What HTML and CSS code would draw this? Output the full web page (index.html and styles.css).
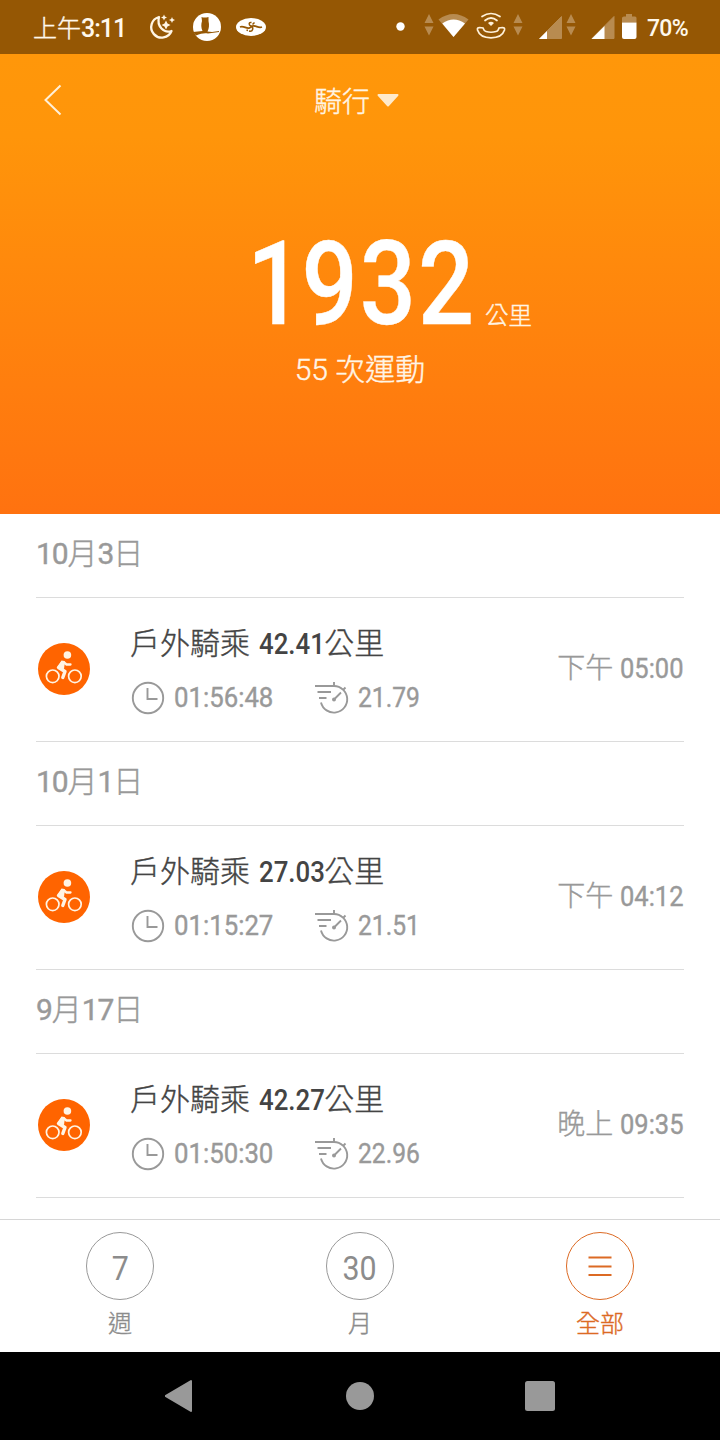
FILE: index.html
```html
<!DOCTYPE html>
<html lang="zh-Hant">
<head>
  <meta charset="UTF-8">
  <meta name="viewport" content="width=device-width, initial-scale=1.0">
  <title>騎行</title>
  <link rel="stylesheet" href="styles.css">
</head>
<body>
  <!-- Shared icons -->
  <svg class="sprite" width="0" height="0">
    <symbol id="bike" viewBox="0 0 52 52">
      <circle cx="26" cy="26" r="26" fill="#ff6400"/>
      <g fill="none" stroke="#fff4e4" stroke-linecap="round" stroke-linejoin="round">
        <circle cx="14.7" cy="33.3" r="6.3" stroke-width="1.7"/>
        <circle cx="36.900" cy="33.3" r="6.3" stroke-width="1.7"/>
        <path d="M24.500 19.500L20.500 24.500L27 28.500L24.800 34.500" stroke-width="3.400"/>
        <path d="M25.500 19L28.500 21.500H32.500" stroke-width="2.300"/>
      </g>
      <path d="M23.500 17.500L27 18.500L26 26L19 25Z" fill="#fff4e4"/>
      <circle cx="29.400" cy="12" r="3.800" fill="#fff4e4"/>
    </symbol>
    <symbol id="clock" viewBox="0 0 34 34">
      <g fill="none" stroke="#999" stroke-width="1.900">
        <circle cx="17" cy="17" r="15.200"/>
        <path d="M16.500 7V18H26.500"/>
      </g>
    </symbol>
    <symbol id="speed" viewBox="0 0 36 34">
      <g fill="none" stroke="#999" stroke-width="1.900">
        <path d="M1 5H20A13.300 13.300 0 1 1 7 21.500"/>
        <path d="M3.500 11H17M5 17H12.500M20 1V5M29 9L31.500 6.500M20 18.500L27 11.500"/>
      </g>
      <circle cx="20" cy="18.500" r="2" fill="#999"/>
    </symbol>
    <symbol id="updown" viewBox="0 0 10 22">
      <path d="M5 0L9.500 9H.5ZM5 21.500L9.500 12.500H.5Z" fill="#b88b50"/>
    </symbol>
  </svg>

  <div class="status-bar">
    <div class="status-left">
      <span class="status-time">上午<b>3:11</b></span>
      <svg class="icon-moon" width="28" height="28" viewBox="0 0 28 28">
        <path d="M11 4A10.500 10.500 0 1 0 23.500 18C16 20.500 8.500 13.500 11 4Z" fill="none" stroke="#fff5e4" stroke-width="2.300" stroke-linejoin="round"/>
        <path d="M18 7.500L19.500 10.500L22.500 12L19.500 13.500L18 16.500L16.500 13.500L13.500 12L16.500 10.500ZM16 1.500L16.900 3.600L19 4.500L16.900 5.400L16 7.500L15.100 5.400L13 4.500L15.100 3.600ZM24 4L24.900 6.100L27 7L24.900 7.900L24 10L23.100 7.900L21 7L23.100 6.100Z" fill="#fff5e4"/>
      </svg>
      <svg class="icon-owl" width="28" height="28" viewBox="0 0 28 28">
        <circle cx="14" cy="14" r="14" fill="#fff"/>
        <path d="M8.500 4L10 4.500H13.500L15.500 4V8C16.500 12 16 16 14.500 18.500L19 19L26 18V19L15 20.500C11 20 8 20.500 3 22.500L0 19L9.500 18C8 15 8 11 9 8Z" fill="#955704"/>
      </svg>
      <svg class="icon-eye" width="30" height="18" viewBox="0 0 30 18">
        <ellipse cx="15" cy="9" rx="15" ry="9" fill="#fff"/>
        <path d="M4 9C8 7.500 10 11 13.500 10L16.500 8C20 7 22 10.500 26 9" fill="none" stroke="#955704" stroke-width="1.800"/>
        <path d="M15.500 4.500C12.500 4 12.500 7 15 8C18 9.500 17 14 13 13M18.500 4.500L16.500 6.500M11.500 11.500L11 13" fill="none" stroke="#955704" stroke-width="1.500"/>
      </svg>
    </div>
    <div class="status-right">
      <svg width="240" height="30" viewBox="0 0 240 30">
        <circle cx="5.500" cy="14.500" r="4.200" fill="#fff"/>
        <use href="#updown" x="29" y="2" width="10" height="22"/>
        <path d="M43.500 7.500Q58.500 -3.500 73.500 7.500L58.500 25Z" fill="#b88b50"/>
        <path d="M47.300 11.500Q58.500 3.500 70 11.500L58.500 25Z" fill="#fff"/>
        <g fill="none" stroke="#fff1da" stroke-width="1.700" stroke-linecap="round">
          <path d="M87 4.500Q96 -1.500 105 4.500M90 8.500Q96 3.500 102 8.500"/>
          <path d="M82.500 18Q85 25.800 96 25.800Q107 25.800 109.500 18Q110 15.500 107.500 15.500L104 16Q103 19.500 101 19.500Q96 21 91 19.500Q89 19 88 16L84.500 15.500Q82 15.500 82.500 18"/>
        </g>
        <path d="M93 11Q96 8.500 99 11L96 14Z" fill="#fff1da"/>
        <use href="#updown" x="118" y="2" width="10" height="22"/>
        <path d="M144.500 26.500L166.500 4.500V26.500Z" fill="#b88b50" stroke="#b88b50" stroke-linejoin="round"/>
        <path d="M144 27L152 19V27Z" fill="#fff"/>
        <use href="#updown" x="171" y="2" width="10" height="22"/>
        <path d="M197 26.500L219 4.500V26.500Z" fill="#b88b50" stroke="#b88b50" stroke-linejoin="round"/>
        <path d="M196.500 27L209.500 14V27Z" fill="#fff"/>
        <path d="M231 2H237V4.500H240Q241.500 4.500 241.500 6V10.500H227V6Q227 4.500 229 4.500H231Z" fill="#b88b50"/>
        <path d="M227 10.500H241.500V25Q241.500 27 239.500 27H229Q227 27 227 25Z" fill="#fff"/>
      </svg>
      <span class="battery">70%</span>
    </div>
  </div>

  <header class="hero">
    <div class="title-bar">
      <svg class="back" width="20" height="32" viewBox="0 0 20 32">
        <path d="M17.500 1.500L2.500 16L17.500 30.500" fill="none" stroke="#fff0d8" stroke-width="2"/>
      </svg>
      <h1 class="page-title">騎行</h1>
      <svg width="22" height="14" viewBox="0 0 22 14">
        <path d="M1.500 2H20.500L11 12.500Z" fill="#ffeacb" stroke="#ffeacb" stroke-width="2" stroke-linejoin="round"/>
      </svg>
    </div>
    <div class="total">
      <span class="total-value">1932</span>
      <span class="total-unit">公里</span>
    </div>
    <p class="total-count">55 次運動</p>
  </header>

  <main class="list">
    <h2 class="date"><span class="d">10</span>月<span class="d">3</span>日</h2>
    <div class="ride">
      <svg class="ride-icon" width="52" height="52"><use href="#bike"/></svg>
      <div class="ride-info">
        <div class="ride-name">戶外騎乘 <span class="ride-km">42.41</span>公里</div>
        <div class="ride-stats">
          <svg width="34" height="34"><use href="#clock"/></svg>
          <span class="duration">01:56:48</span>
          <svg width="36" height="34"><use href="#speed"/></svg>
          <span class="speed">21.79</span>
        </div>
      </div>
      <div class="ride-time">下午 <span class="hour">05:00</span></div>
    </div>

    <h2 class="date"><span class="d">10</span>月<span class="d">1</span>日</h2>
    <div class="ride">
      <svg class="ride-icon" width="52" height="52"><use href="#bike"/></svg>
      <div class="ride-info">
        <div class="ride-name">戶外騎乘 <span class="ride-km">27.03</span>公里</div>
        <div class="ride-stats">
          <svg width="34" height="34"><use href="#clock"/></svg>
          <span class="duration">01:15:27</span>
          <svg width="36" height="34"><use href="#speed"/></svg>
          <span class="speed">21.51</span>
        </div>
      </div>
      <div class="ride-time">下午 <span class="hour">04:12</span></div>
    </div>

    <h2 class="date"><span class="d">9</span>月<span class="d">17</span>日</h2>
    <div class="ride">
      <svg class="ride-icon" width="52" height="52"><use href="#bike"/></svg>
      <div class="ride-info">
        <div class="ride-name">戶外騎乘 <span class="ride-km">42.27</span>公里</div>
        <div class="ride-stats">
          <svg width="34" height="34"><use href="#clock"/></svg>
          <span class="duration">01:50:30</span>
          <svg width="36" height="34"><use href="#speed"/></svg>
          <span class="speed">22.96</span>
        </div>
      </div>
      <div class="ride-time">晚上 <span class="hour">09:35</span></div>
    </div>
  </main>

  <nav class="tabs">
    <div class="tab">
      <div class="tab-circle"><span>7</span></div>
      <div class="tab-label">週</div>
    </div>
    <div class="tab">
      <div class="tab-circle"><span>30</span></div>
      <div class="tab-label">月</div>
    </div>
    <div class="tab active">
      <div class="tab-circle">
        <svg width="24" height="22" viewBox="0 0 24 22">
          <path d="M.5 2.500H23.500M.5 11.500H23.500M.5 20H23.500" stroke="#dc6a24" stroke-width="2"/>
        </svg>
      </div>
      <div class="tab-label">全部</div>
    </div>
  </nav>

  <div class="system-nav">
    <svg width="30" height="34" viewBox="0 0 30 34"><path d="M.5 17L26 2V32Z" fill="#999" stroke="#999" stroke-width="2" stroke-linejoin="round"/></svg>
    <svg width="30" height="30" viewBox="0 0 30 30"><circle cx="15" cy="15" r="14" fill="#999"/></svg>
    <svg width="30" height="30" viewBox="0 0 30 30"><rect width="30" height="30" rx="2.500" fill="#999"/></svg>
  </div>
</body>
</html>
```
FILE: styles.css
```css
* {
  margin: 0;
  padding: 0;
  box-sizing: border-box;
}

body {
  width: 720px;
  height: 1440px;
  overflow: hidden;
  display: flex;
  flex-direction: column;
  font-family: Roboto, "Noto Sans CJK TC", sans-serif;
  font-weight: 300;
  -webkit-text-stroke: 0.4px;
  background: #fff;
  color: #999;
}

svg {
  display: block;
  flex: none;
}

.sprite {
  display: none;
}

/* Status bar */
.status-bar {
  height: 54px;
  flex: none;
  display: flex;
  justify-content: space-between;
  padding: 0 32px 0 33px;
  background: #955704;
  color: #fff8ec;
}

.status-left,
.status-right {
  display: flex;
  align-items: center;
}

.status-time {
  width: 115px;
  font-size: 24px;
  line-height: 30px;
  padding-top: 3px;
  white-space: nowrap;
}

.status-time b {
  font-weight: 500;
  font-size: 25px;
  letter-spacing: -1px;
  -webkit-text-stroke: 0;
}

.icon-owl {
  margin-left: 17px;
}

.icon-eye {
  margin-left: 15px;
}

.battery {
  width: 41px;
  margin-left: 12px;
  padding-top: 2px;
  font-size: 23px;
  font-weight: 500;
  letter-spacing: -0.7px;
  -webkit-text-stroke: 0;
}

.status-right svg {
  overflow: visible;
}

/* Orange header */
.hero {
  height: 460px;
  flex: none;
  display: flex;
  flex-direction: column;
  align-items: center;
  background: linear-gradient(#ff970a 0%, #ff950a 18%, #ff7210 100%);
  color: #fff5e6;
}

.title-bar {
  width: 100%;
  height: 92px;
  display: flex;
  align-items: center;
  padding-left: 43px;
}

.page-title {
  width: 56px;
  margin: 0 7px 0 251px;
  font-size: 28px;
  font-weight: 300;
  white-space: nowrap;
}

.total {
  width: 284px;
  height: 100px;
  margin: 88px 0 0 68px;
  display: flex;
  align-items: baseline;
  line-height: 100px;
}

.total-value {
  flex: none;
  width: 238px;
  margin-left: -5px;
  font-size: 117px;
  font-weight: 500;
  letter-spacing: 2.5px;
  color: #fff;
  transform: scaleX(0.845);
  transform-origin: left;
}

/* the 1 sits tighter against the next digit */
.total-value::first-letter {
  letter-spacing: -2px;
}

.total-unit {
  flex: none;
  font-size: 23.5px;
}

.total-count {
  margin-top: 12px;
  font-size: 30px;
  line-height: 48px;
}

/* Ride list */
.list {
  height: 705px;
  flex: none;
  padding: 0 36px;
}

.date {
  height: 84px;
  line-height: 80px;
  border-bottom: 1px solid #dcdcdc;
  font-size: 30px;
  font-weight: 300;
}

.d {
  font-weight: 400;
  letter-spacing: -1.1px;
}

.ride {
  height: 144px;
  display: flex;
  align-items: center;
  padding: 0 0 2px 2px;
  border-bottom: 1px solid #dcdcdc;
}

.ride-info {
  flex: 1;
  margin-left: 40px;
  padding-bottom: 3px;
}

.ride-name {
  height: 62px;
  line-height: 50px;
  font-size: 30px;
  color: #444;
  white-space: nowrap;
}

.ride-km {
  display: inline-block;
  width: 65px;
  margin-left: 2px;
  font-weight: 500;
  -webkit-text-stroke: 0;
  transform: scaleX(0.86);
  transform-origin: left;
}

.ride-stats {
  display: flex;
  align-items: center;
  height: 34px;
  margin-left: 1px;
  font-size: 28px;
  font-weight: 400;
}

.duration {
  width: 132px;
  margin: 0 8px 2px 9px;
  transform: scaleX(0.92);
  transform-origin: left;
}

.speed {
  margin: 0 0 2px 8px;
  transform: scaleX(0.88);
  transform-origin: left;
}

.ride-time {
  padding-bottom: 5px;
  font-size: 28px;
  white-space: nowrap;
}

.hour {
  display: inline-block;
  width: 64px;
  font-weight: 400;
  transform: scaleX(0.91);
  transform-origin: left;
}

/* Bottom tabs */
.tabs {
  height: 133px;
  flex: none;
  display: flex;
  border-top: 1px solid #d6d6d6;
}

.tab {
  flex: 1;
  display: flex;
  flex-direction: column;
  align-items: center;
  padding-top: 12px;
  color: #8c8c8c;
}

.tab-circle {
  width: 68px;
  height: 68px;
  display: flex;
  align-items: center;
  justify-content: center;
  border: 1px solid #999;
  border-radius: 50%;
  font-size: 33px;
  font-weight: 400;
  -webkit-text-stroke: 0;
}

.tab-circle span {
  padding-top: 4px;
  transform: scaleX(0.92);
}

.tab-label {
  font-size: 24px;
  line-height: 48px;
}

.active {
  color: #dc6a24;
}

.active .tab-circle {
  border-color: #dc6a24;
}

/* Android navigation */
.system-nav {
  height: 88px;
  flex: none;
  display: flex;
  align-items: center;
  justify-content: center;
  gap: 150px;
  background: #000;
}
```
